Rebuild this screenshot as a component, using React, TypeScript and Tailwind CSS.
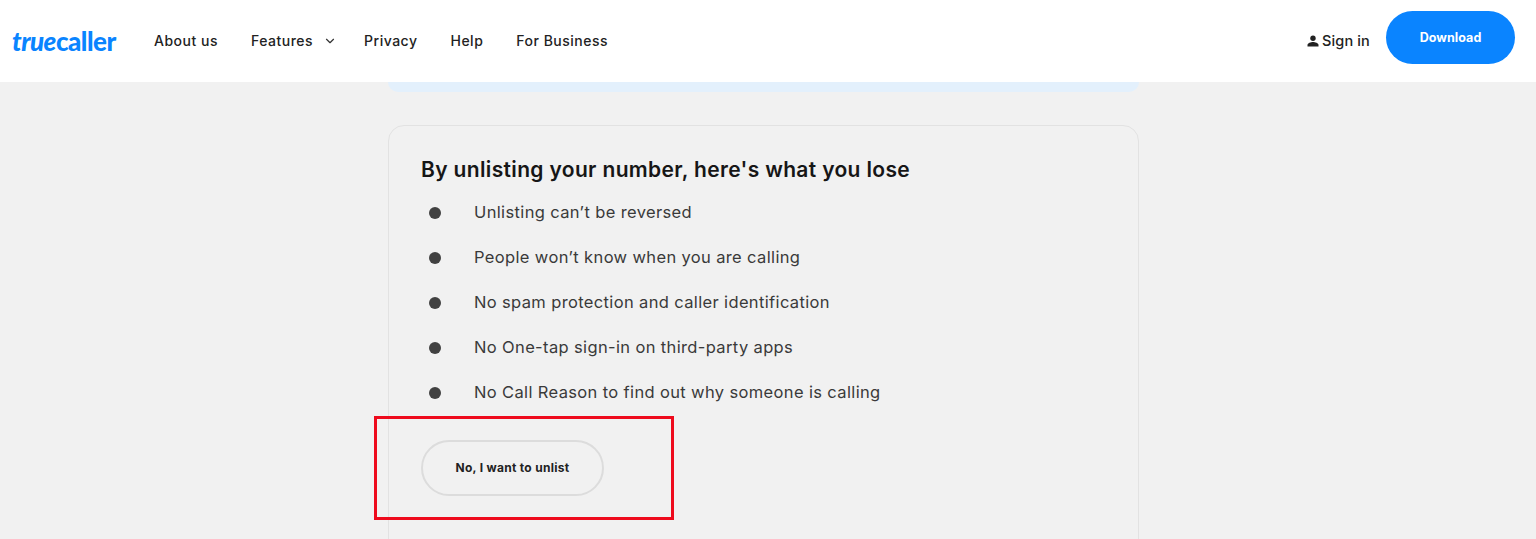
import React from 'react';
import { ChevronDown } from 'lucide-react';

const navItems = ['About us', 'Features', 'Privacy', 'Help', 'For Business'];

const losses = [
  'Unlisting can’t be reversed',
  'People won’t know when you are calling',
  'No spam protection and caller identification',
  'No One-tap sign-in on third-party apps',
  'No Call Reason to find out why someone is calling',
];

const UserIcon = () => (
  <svg viewBox="0 0 12 12" className="w-3 h-3 text-[#222]" fill="currentColor">
    <circle cx="6" cy="3.2" r="2.7" />
    <path d="M0.5 11.5V10c0-1.9 3.4-3 5.5-3s5.5 1.1 5.5 3v1.5z" />
  </svg>
);

export default function App() {
  return (
    <div className="h-[539px] overflow-hidden bg-[#f1f1f1] font-['Inter',sans-serif]">
      <header className="h-[82px] bg-white flex items-center pl-3 pr-[21px]">
        <div className="w-[142px] font-['Lato',sans-serif] font-black text-[26px] leading-none text-[#0a84ff] tracking-[-0.5px]">
          <span className="italic">true</span>caller
        </div>
        <nav className="flex items-center text-[14px] leading-[20px] font-medium text-[#222] tracking-[0.5px]">
          {navItems.map((item) => (
            <div key={item} className="flex items-center mr-[33px]">
              <span>{item}</span>
              {item === 'Features' && <ChevronDown className="w-3.5 h-3.5 ml-[9.5px] -mr-[5.5px] text-[#333]" />}
            </div>
          ))}
        </nav>
        <div className="ml-auto flex items-center">
          <UserIcon />
          <span className="ml-[3px] text-[14.5px] font-medium text-[#222] tracking-[0.15px]">Sign in</span>
          <button className="ml-[16px] mb-[7px] w-[129px] h-[53px] pt-[1px] rounded-full bg-[#0a84ff] text-white text-[12.5px] font-bold tracking-[0.05px]">
            Download
          </button>
        </div>
      </header>

      <main className="w-[751px] ml-[388px]">
        <div className="h-[10px] bg-[#e3f0fc] rounded-b-[14px]" />
        <section className="relative mt-[33px] h-[500px] border border-[#e2e2e2] rounded-[16px] pt-[31px] pl-[32px]">
          <h2 className="text-[21px] leading-[26px] font-semibold text-[#161616] tracking-[0.35px]">
            By unlisting your number, here's what you lose
          </h2>
          <ul className="mt-[7px]">
            {losses.map((text) => (
              <li key={text} className="h-[45px] flex items-center text-[#3a3a3a] text-[16.5px] tracking-[0.36px]">
                <span className="w-3 h-3 ml-[8px] mr-[33px] rounded-full bg-[#414141]" />
                {text}
              </li>
            ))}
          </ul>
          <button className="mt-[25px] w-[183px] h-[56px] rounded-full border-2 border-[#dcdcdc] text-[12px] font-bold text-[#222] tracking-[0.3px]">
            No, I want to unlist
          </button>
          <div className="absolute left-[-15px] top-[290px] w-[300px] h-[104px] border-[3.5px] border-[#ee0a1c]" />
        </section>
      </main>
    </div>
  );
}
